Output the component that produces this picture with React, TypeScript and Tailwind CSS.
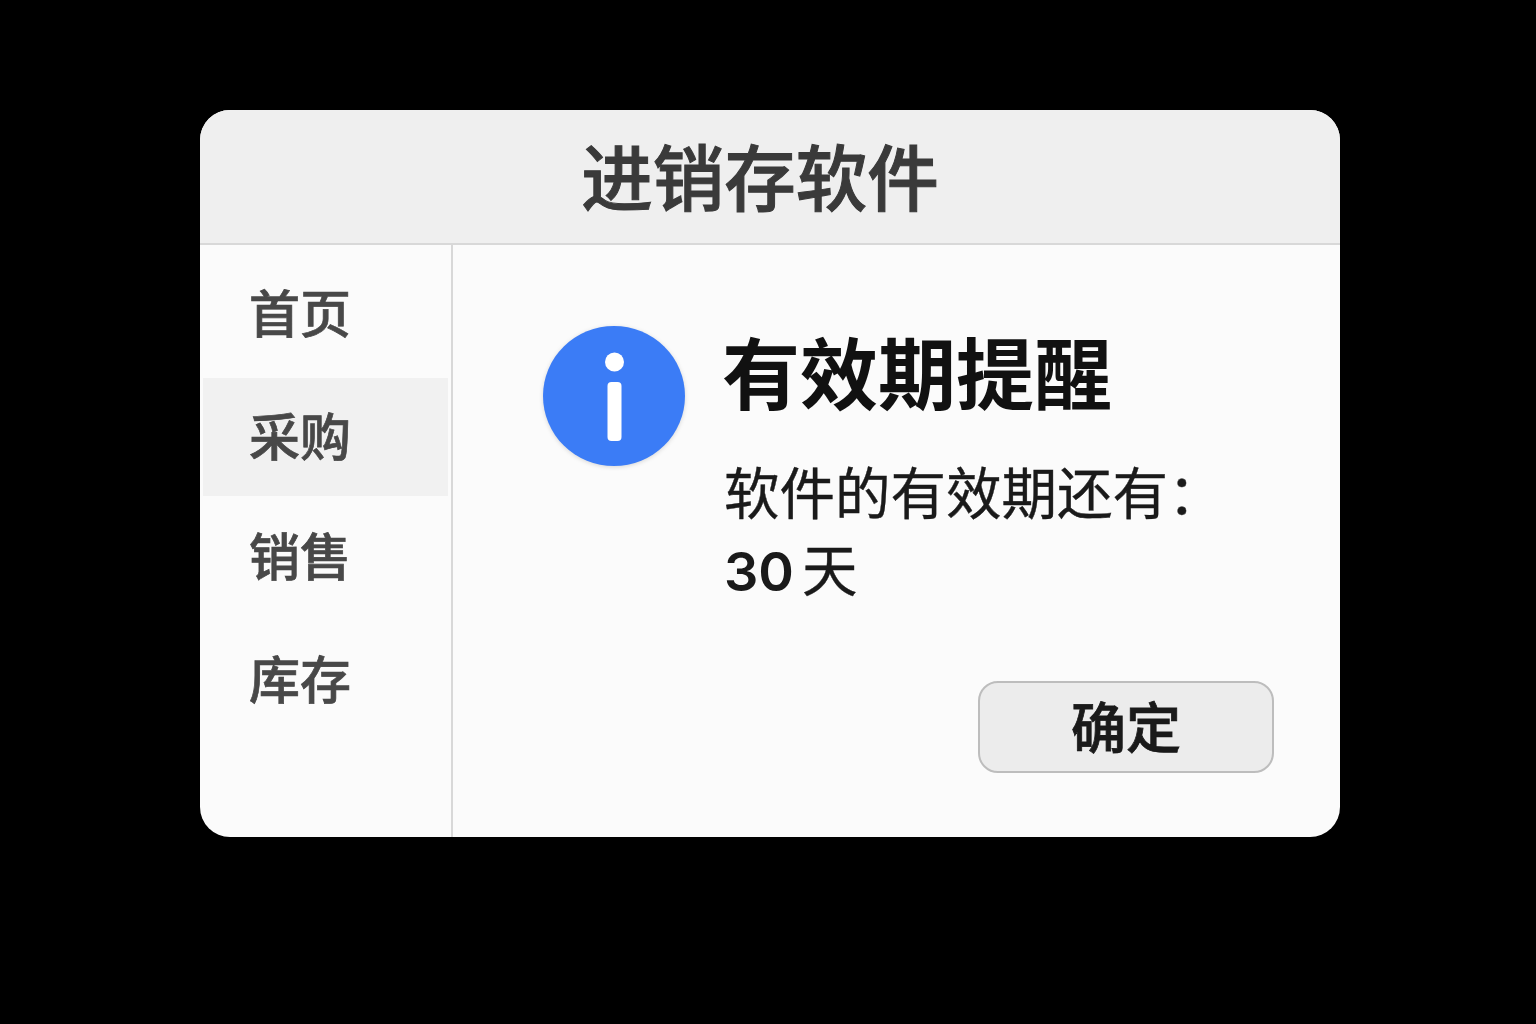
const menu = [
  { label: "首页", cls: "h-[121px] pb-[12px] pl-[49px]" },
  { label: "采购", cls: "h-[118px] mx-[3px] pb-[5px] pl-[46px] bg-[#f1f1f1]" },
  { label: "销售", cls: "h-[121px] pb-[5px] pl-[49px]" },
  { label: "库存", cls: "h-[121px] pl-[49px]" },
];

export default function App() {
  return (
    <div className="flex h-[1024px] w-[1536px] items-start justify-center bg-black pt-[110px] pl-[4px] font-['Noto_Sans_CJK_SC',sans-serif]">
      <div className="flex h-[727px] w-[1140px] flex-col overflow-hidden rounded-[30px] bg-[#fbfbfb]">
        <div className="flex h-[135px] shrink-0 items-center justify-center border-b-2 border-[#d8d8d8] bg-[#efefef] pr-[20px] pb-[3px]">
          <h1 className="text-[71.5px] leading-none font-medium text-[#3a3a3a] [-webkit-text-stroke:1px_#3a3a3a]">进销存软件</h1>
        </div>
        <div className="flex flex-1">
          <div className="flex w-[253px] shrink-0 flex-col border-r-2 border-[#d8d8d8] pt-[12px]">
            {menu.map((m) => (
              <div
                key={m.label}
                className={`flex items-center text-[51px] leading-none font-medium text-[#484848] [-webkit-text-stroke:0.7px_#484848] ${m.cls}`}
              >
                {m.label}
              </div>
            ))}
          </div>
          <div className="flex flex-1 flex-col pt-[80px] pl-[90px]">
            <div className="flex gap-[38px]">
              <svg width="143" height="143" viewBox="0 0 143 143" className="shrink-0 drop-shadow-sm">
                <ellipse cx="71" cy="71" rx="71" ry="70" fill="#3b7cf6" />
                <circle cx="71.5" cy="37" r="9.5" fill="#fff" />
                <rect x="64.5" y="57" width="14" height="59" rx="4" fill="#fff" />
              </svg>
              <div className="flex flex-col">
                <h2 className="mt-[-4px] -ml-[2px] text-[78px] leading-[98px] font-bold text-[#111111]">有效期提醒</h2>
                <p className="mt-[33px] text-[55.5px] leading-[77px] text-[#1a1a1a] [-webkit-text-stroke:0.4px_#1a1a1a]">软件的有效期还有：</p>
                <p className="text-[55.5px] leading-[77px] text-[#1a1a1a]">
                  <span className="font-['Inter',sans-serif] text-[54px] font-semibold">30</span>
                  <span className="ml-[8px] [-webkit-text-stroke:0.4px_#1a1a1a]">天</span>
                </p>
              </div>
            </div>
            <div className="mt-auto mr-[66px] mb-[64px] flex justify-end">
              <button className="h-[92px] w-[296px] rounded-[20px] border-2 border-[#bdbdbd] bg-[#ececec] pb-[6px] text-[55px] leading-none font-medium text-[#1a1a1a] [-webkit-text-stroke:0.8px_#1a1a1a]">
                确定
              </button>
            </div>
          </div>
        </div>
      </div>
    </div>
  );
}
